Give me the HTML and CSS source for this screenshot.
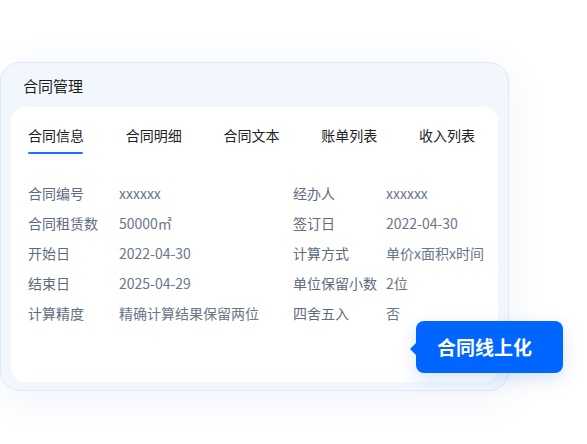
FILE: index.html
```html
<!DOCTYPE html>
<html lang="zh">
<head>
  <meta charset="UTF-8" />
  <title>合同管理</title>
  <link rel="stylesheet" href="styles.css">
</head>
<body>
  <!-- 合同管理卡片 -->
  <div class="panel">
    <div class="panel-title">合同管理</div>
    <div class="panel-body">
      <div class="tabs">
        <span class="tab active">合同信息</span>
        <span class="tab">合同明细</span>
        <span class="tab">合同文本</span>
        <span class="tab">账单列表</span>
        <span class="tab">收入列表</span>
      </div>
      <div class="info">
        <span class="label">合同编号</span><span class="value">xxxxxx</span>
        <span class="label">经办人</span><span class="value">xxxxxx</span>
        <span class="label">合同租赁数</span><span class="value">50000㎡</span>
        <span class="label">签订日</span><span class="value">2022-04-30</span>
        <span class="label">开始日</span><span class="value">2022-04-30</span>
        <span class="label">计算方式</span><span class="value">单价x面积x时间</span>
        <span class="label">结束日</span><span class="value">2025-04-29</span>
        <span class="label">单位保留小数</span><span class="value">2位</span>
        <span class="label">计算精度</span><span class="value">精确计算结果保留两位</span>
        <span class="label">四舍五入</span><span class="value">否</span>
      </div>
    </div>
  </div>

  <!-- 提示气泡 -->
  <div class="bubble">合同线上化</div>
</body>
</html>
```

FILE: styles.css
```css
/* 全局 */
body {
  margin: 0;
  padding: 62px 0 0 0;
  background: #ffffff;
  font-family: "Noto Sans CJK SC", "Noto Sans", sans-serif;
  height: 444px;
  box-sizing: border-box;
  overflow: hidden;
}
.panel {
  width: 509px;
  height: 329px;
  box-sizing: border-box;
  background: #f2f7fe;
  border: 1px solid #dfe8f6;
  border-radius: 20px;
  box-shadow: 0 8px 40px rgba(40, 90, 170, 0.07);
  display: flex;
  flex-direction: column;
}
.panel-title {
  height: 44px;
  padding: 13px 0 0 22px;
  box-sizing: border-box;
  font-size: 15px;
  line-height: 20px;
  color: #1a1a1a;
}
.panel-body {
  margin: 0 10px;
  height: 275px;
  background: #ffffff;
  border-radius: 14px;
}
/* 标签页 */
.tabs {
  display: flex;
  gap: 41.75px;
  padding: 18px 0 0 17px;
}
.tab {
  position: relative;
  font-size: 14px;
  line-height: 20px;
  color: #222;
  padding-bottom: 9px;
}
.tab.active::after {
  content: "";
  position: absolute;
  left: 0;
  right: 1px;
  bottom: 0;
  height: 2px;
  border-radius: 1px;
  background: #1a73ff;
}
/* 信息表格 */
.info {
  display: grid;
  grid-template-columns: 91px 174px 93px auto;
  grid-auto-rows: 30px;
  align-items: center;
  padding: 24px 0 0 17px;
  font-size: 14px;
  white-space: nowrap;
}
.label {
  color: #5f6c80;
}
.value {
  color: #6a7689;
}
/* 气泡 */
.bubble {
  position: absolute;
  left: 416px;
  top: 321px;
  width: 147px;
  height: 52px;
  box-sizing: border-box;
  background: #0066ff;
  border-radius: 8px;
  color: #ffffff;
  font-size: 19px;
  font-weight: bold;
  line-height: 52px;
  padding-left: 21px;
  box-shadow: 0 6px 18px rgba(0, 80, 200, 0.16);
}
.bubble::before {
  content: "";
  position: absolute;
  left: -6px;
  top: 22px;
  border-style: solid;
  border-width: 6px 6px 6px 0;
  border-color: transparent #0066ff transparent transparent;
}
```
